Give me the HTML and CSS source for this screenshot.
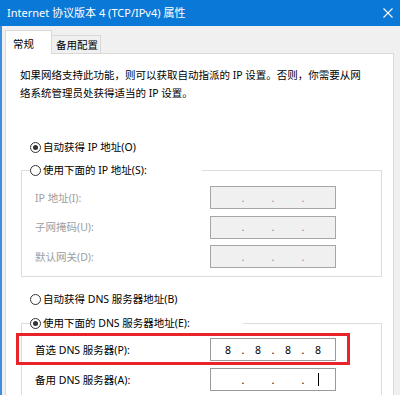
FILE: index.html
```html
<!DOCTYPE html>
<html lang="zh-CN">
<head>
<meta charset="utf-8">
<title>Internet 协议版本 4 (TCP/IPv4) 属性</title>
<link rel="stylesheet" href="styles.css">
</head>
<body>
<div class="window">
  <div class="titlebar">
    <span class="title">Internet 协议版本 4 (TCP/IPv4) 属性</span>
    <svg class="close" width="10" height="10" viewBox="0 0 10 10"><path d="M0.5 0.5 L9.5 9.5 M9.5 0.5 L0.5 9.5" stroke="#fff" stroke-width="1.1" fill="none"/></svg>
  </div>
  <div class="client">
    <div class="tabs">
      <div class="tab active">常规</div>
      <div class="tab inactive">备用配置</div>
    </div>
    <div class="panel">
      <p class="desc">如果网络支持此功能，则可以获取自动指派的 IP 设置。否则，你需要从网<br>络系统管理员处获得适当的 IP 设置。</p>

      <div class="radio-row first">
        <span class="radio checked"></span><span>自动获得 IP 地址(O)</span>
      </div>
      <fieldset class="group group-ip">
        <legend class="legend legend-ip"><span class="radio"></span><span>使用下面的 IP 地址(S):</span></legend>
        <div class="field-row">
          <span class="label disabled">IP 地址(I):</span>
          <span class="ipbox disabled"><span class="oct"></span><span class="dot">.</span><span class="oct"></span><span class="dot">.</span><span class="oct"></span><span class="dot">.</span><span class="oct"></span></span>
        </div>
        <div class="field-row">
          <span class="label disabled">子网掩码(U):</span>
          <span class="ipbox disabled"><span class="oct"></span><span class="dot">.</span><span class="oct"></span><span class="dot">.</span><span class="oct"></span><span class="dot">.</span><span class="oct"></span></span>
        </div>
        <div class="field-row">
          <span class="label disabled">默认网关(D):</span>
          <span class="ipbox disabled"><span class="oct"></span><span class="dot">.</span><span class="oct"></span><span class="dot">.</span><span class="oct"></span><span class="dot">.</span><span class="oct"></span></span>
        </div>
      </fieldset>

      <div class="radio-row second">
        <span class="radio"></span><span>自动获得 DNS 服务器地址(B)</span>
      </div>
      <fieldset class="group group-dns">
        <legend class="legend legend-dns"><span class="radio checked"></span><span>使用下面的 DNS 服务器地址(E):</span></legend>
        <div class="field-row highlighted">
          <span class="label">首选 DNS 服务器(P):</span>
          <span class="ipbox"><span class="oct">8</span><span class="dot">.</span><span class="oct">8</span><span class="dot">.</span><span class="oct">8</span><span class="dot">.</span><span class="oct">8</span></span>
          <span class="mark"></span>
        </div>
        <div class="field-row">
          <span class="label">备用 DNS 服务器(A):</span>
          <span class="ipbox"><span class="oct"></span><span class="dot">.</span><span class="oct"></span><span class="dot">.</span><span class="oct"></span><span class="dot">.</span><span class="oct"><span class="caret"></span></span></span>
        </div>
      </fieldset>
    </div>
  </div>
</div>
</body>
</html>
```

FILE: styles.css
```css
* { box-sizing: border-box; }

html, body {
  margin: 0;
  padding: 0;
  width: 400px;
  height: 395px;
  overflow: hidden;
}

body {
  background: #f0f0f0;
  font-family: "Noto Sans", "Noto Sans CJK SC", sans-serif;
  font-size: 10.5px;
  line-height: 18px;
  color: #000;
}

.window {
  display: flex;
  flex-direction: column;
  height: 395px;
}

.titlebar {
  height: 26px;
  flex: none;
  background: #0a78d6;
  color: #fff;
  display: flex;
  align-items: center;
  justify-content: space-between;
  padding: 0 7px 0 7px;
}

.title {
  font-size: 11px;
  line-height: 18px;
  white-space: nowrap;
}

.close { display: block; }

.client {
  flex: 1;
  display: flex;
  flex-direction: column;
  border-left: 2px solid #3d8ee0;
  padding: 0 6px 0 3px;
}

.tabs {
  height: 27px;
  flex: none;
  display: flex;
  align-items: flex-end;
}

.tab {
  white-space: nowrap;
  line-height: 18px;
}

.tab.active {
  position: relative;
  z-index: 1;
  width: 47px;
  height: 24px;
  margin-bottom: -1px;
  border: 1px solid #d9d9d9;
  border-bottom: none;
  background: #fff;
  padding: 4px 0 0 7px;
}

.tab.inactive {
  width: 49px;
  height: 18px;
  border-top: 1px solid #d9d9d9;
  border-right: 1px solid #d9d9d9;
  background: #f0f0f0;
  padding: 0 0 0 4px;
}

.panel {
  flex: 1;
  background: #fff;
  border: 1px solid #d9d9d9;
  border-bottom: none;
}

.desc {
  margin: 12px 0 0 14px;
  white-space: nowrap;
  line-height: 18px;
}

.radio-row {
  display: flex;
  align-items: center;
  gap: 2px;
  height: 18px;
  margin-left: 24px;
  white-space: nowrap;
}

.radio-row.first { margin-top: 36px; }
.radio-row.second { margin-top: 13px; }

.radio {
  width: 11px;
  height: 11px;
  flex: none;
  border: 1px solid #333;
  border-radius: 50%;
  background: #fff;
  display: grid;
  place-items: center;
}

.radio.checked::after {
  content: "";
  width: 5px;
  height: 5px;
  border-radius: 50%;
  background: #333;
}

.group {
  min-width: 0;
  margin: 5px 11px 0 15px;
  border: 1px solid #dcdcdc;
  padding: 7px 0 8px 8px;
}

.group-dns {
  margin-top: 6px;
  padding-top: 6px;
  border-bottom: none;
}

.legend {
  display: flex;
  align-items: center;
  gap: 2px;
  height: 18px;
  padding: 0;
  white-space: nowrap;
}

.legend-ip { width: 172px; }
.legend-dns { width: 213px; }

.field-row {
  display: flex;
  align-items: center;
  height: 23px;
  padding-left: 5px;
  white-space: nowrap;
}

.field-row + .field-row { margin-top: 6.5px; }
.group-dns .field-row + .field-row { margin-top: 7px; }

.field-row.highlighted { position: relative; }

.label {
  width: 175px;
  flex: none;
}

.label.disabled { color: #9d9d9d; }

.ipbox {
  width: 126px;
  height: 23px;
  flex: none;
  display: flex;
  align-items: center;
  padding-left: 6px;
  border: 1px solid #9a9a9a;
  background: #fff;
  color: #000;
}

.ipbox.disabled {
  background: #f0f0f0;
  border-color: #a6a6a6;
  color: #8a8a8a;
}

.oct {
  width: 22px;
  text-align: center;
  display: flex;
  justify-content: center;
  align-items: center;
  height: 18px;
}

.dot {
  width: 8px;
  text-align: center;
}

.caret {
  display: block;
  width: 1px;
  height: 13px;
  background: #000;
}

.mark {
  position: absolute;
  left: -14px;
  top: -5px;
  width: 334px;
  height: 32px;
  border: 3px solid #e8232a;
  pointer-events: none;
}
```
